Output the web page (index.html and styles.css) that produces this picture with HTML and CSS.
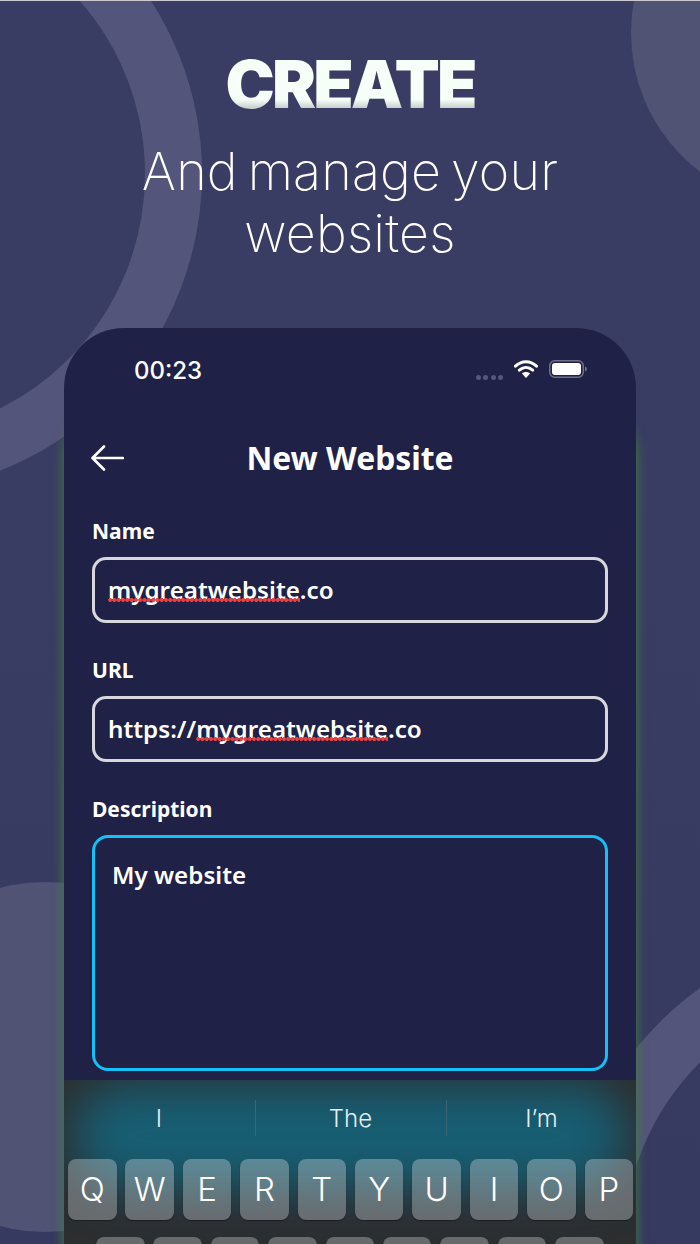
FILE: index.html
```html
<!DOCTYPE html>
<html lang="en">
<head>
<meta charset="utf-8">
<title>Create</title>
<link rel="stylesheet" href="styles.css">
</head>
<body>
<main class="page">
  <div class="deco ring-top"></div>
  <div class="deco disc-top"></div>
  <div class="deco disc-left"></div>
  <div class="deco ring-bottom"></div>

  <header class="hero">
    <h1 class="hero-title">CREATE</h1>
    <p class="hero-sub">And manage your<br>websites</p>
  </header>

  <section class="phone">
    <div class="status">
      <span class="time">00:23</span>
      <div class="status-icons">
        <span class="dots"><i></i><i></i><i></i><i></i></span>
        <svg class="wifi" viewBox="0 0 24 18" width="24" height="18" aria-hidden="true">
          <path d="M1.5 6.2C7.8.4 16.2.4 22.5 6.2M5.4 10.2c4-3.6 9.2-3.6 13.2 0" fill="none" stroke="#fff" stroke-width="3" stroke-linecap="round"/>
          <path d="M12 18l-4.1-4.4c2.3-2 5.9-2 8.2 0z" fill="#fff"/>
        </svg>
        <svg class="battery" viewBox="0 0 38 18" width="38" height="18" aria-hidden="true">
          <rect x=".75" y=".75" width="33.5" height="16.5" rx="5" fill="none" stroke="#6d7089" stroke-width="1.5"/>
          <rect x="3" y="3" width="29" height="12" rx="3" fill="#fff"/>
          <path d="M36 6.5c1.3.4 2 1.4 2 2.500s-.7 2.100-2 2.500z" fill="#6d7089"/>
        </svg>
      </div>
    </div>

    <div class="nav">
      <svg class="back" viewBox="0 0 34 28" width="34" height="28" aria-hidden="true">
        <path d="M33 14H3M14 2.500 2.500 14 14 25.500" fill="none" stroke="#fff" stroke-width="2.600" stroke-linecap="round" stroke-linejoin="round"/>
      </svg>
      <h2 class="nav-title">New Website</h2>
    </div>

    <form class="form">
      <label class="label">Name</label>
      <div class="field"><span class="typo">mygreatwebsite</span>.co</div>
      <label class="label">URL</label>
      <div class="field">https://<span class="typo">mygreatwebsite</span>.co</div>
      <label class="label">Description</label>
      <div class="area">My website</div>
    </form>

    <div class="keyboard">
      <div class="suggest">
        <span class="sug">I</span>
        <span class="sug">The</span>
        <span class="sug">I’m</span>
      </div>
      <div class="row">
        <span class="key">Q</span><span class="key">W</span><span class="key">E</span><span class="key">R</span><span class="key">T</span><span class="key">Y</span><span class="key">U</span><span class="key">I</span><span class="key">O</span><span class="key">P</span>
      </div>
      <div class="row row-2">
        <span class="key"></span><span class="key"></span><span class="key"></span><span class="key"></span><span class="key"></span><span class="key"></span><span class="key"></span><span class="key"></span><span class="key"></span>
      </div>
    </div>
  </section>
</main>
</body>
</html>
```

FILE: styles.css
```css
* { box-sizing: border-box; }
html, body { margin: 0; padding: 0; }
body { width: 700px; height: 1244px; overflow: hidden; background: #393c62; font-family: "Inter", "Liberation Sans", sans-serif; color: #fff; }

.page { position: relative; width: 700px; height: 1244px; overflow: hidden; background: linear-gradient(180deg, #3a3d63 0%, #3a3d63 40%, #363960 100%); border-top: 1px solid #c9c9cf; display: flex; flex-direction: column; }

.deco { position: absolute; border-radius: 50%; }
.ring-top { left: -436px; top: -146px; width: 638px; height: 638px; border: 57px solid #53557a; }
.disc-top { left: 631px; top: -142px; width: 348px; height: 348px; background: #505374; }
.disc-left { left: -130px; top: 881px; width: 350px; height: 350px; background: #505374; }
.ring-bottom { left: 566px; top: 928px; width: 638px; height: 638px; border: 57px solid #53557a; }

.hero { position: relative; flex: none; text-align: center; padding-top: 48px; height: 327px; }
.hero-title { margin: 0; font-size: 66px; line-height: 70px; font-weight: 900; letter-spacing: -2.800px; background: linear-gradient(180deg, #f7fff9 0%, #f7fff9 72%, #a9b2b2 92%); -webkit-background-clip: text; background-clip: text; color: transparent; }
.hero-sub { margin: 22px 0 0; font-size: 52px; line-height: 62px; font-weight: 200; letter-spacing: .2px; word-spacing: -5px; color: #fff; }

.phone { position: relative; flex: none; margin: 0 64px; height: 916px; background: #1f2246; border-radius: 60px 60px 0 0; box-shadow: 0 70px 11px 1px rgba(60, 130, 55, .85); display: flex; flex-direction: column; }

.status { height: 84px; flex: none; display: flex; align-items: center; justify-content: space-between; padding: 0 49px 0 70px; }
.time { font-size: 24px; font-weight: 500; }
.status-icons { display: flex; align-items: center; gap: 11px; }
.dots { display: flex; gap: 2.400px; margin-top: 14px; }
.dots i { width: 5px; height: 5px; border-radius: 50%; background: #55587a; }
.wifi, .battery { display: block; margin-top: -2px; }

.nav { position: relative; flex: none; height: 106px; padding-bottom: 16px; display: flex; align-items: center; justify-content: center; }
.back { position: absolute; left: 26px; top: 32px; }
.nav-title { margin: 0; font-family: "Noto Sans", sans-serif; font-size: 31.800px; font-weight: 700; }

.form { flex: none; display: flex; flex-direction: column; padding: 0 28px; font-family: "Noto Sans", sans-serif; }
.label { font-size: 21px; font-weight: 700; line-height: 26px; height: 39px; display: block; }
.field { height: 66px; border: 3px solid #d8d8dc; border-radius: 14px; padding: 0 13px 1px; display: flex; align-items: center; font-size: 24.200px; font-weight: 600; margin-bottom: 34px; white-space: pre; }
.typo { position: relative; }
.typo::after { content: ""; position: absolute; left: 0; right: 0; top: 25px; height: 4px; background: radial-gradient(circle at center, #f04040 1.700px, transparent 2.100px) 0 0 / 4.300px 4px repeat-x; }
.area { height: 236px; border: 3px solid #14c0f5; border-radius: 16px; padding: 22px 17px; font-size: 24.200px; font-weight: 600; line-height: 30px; }

.keyboard { position: relative; flex: none; height: 164px; margin-top: 9px; background: #2c2e30; overflow: hidden; }
.keyboard::before { content: ""; position: absolute; left: 8px; top: 4px; width: 556px; height: 104px; border-radius: 52px; background: #175e73; filter: blur(24px); }
.suggest { position: relative; height: 79px; display: grid; grid-template-columns: repeat(3, 191px); justify-content: center; padding-top: 20px; align-items: start; }
.sug { height: 36px; display: flex; align-items: center; justify-content: center; font-size: 24px; font-weight: 300; color: #e8eef0; }
.sug + .sug { border-left: 1px solid #3d6675; }
.row { position: relative; display: flex; gap: 8.900px; padding-left: 4px; }
.row-2 { margin-top: 17px; padding-left: 32px; }
.key { flex: 0 0 48.500px; height: 61px; padding-bottom: 2px; border-radius: 8px; background: rgba(255, 255, 255, .29); box-shadow: 0 1px 1px #1c1e20; display: flex; align-items: center; justify-content: center; font-size: 33px; font-weight: 300; color: #fff; }
```
